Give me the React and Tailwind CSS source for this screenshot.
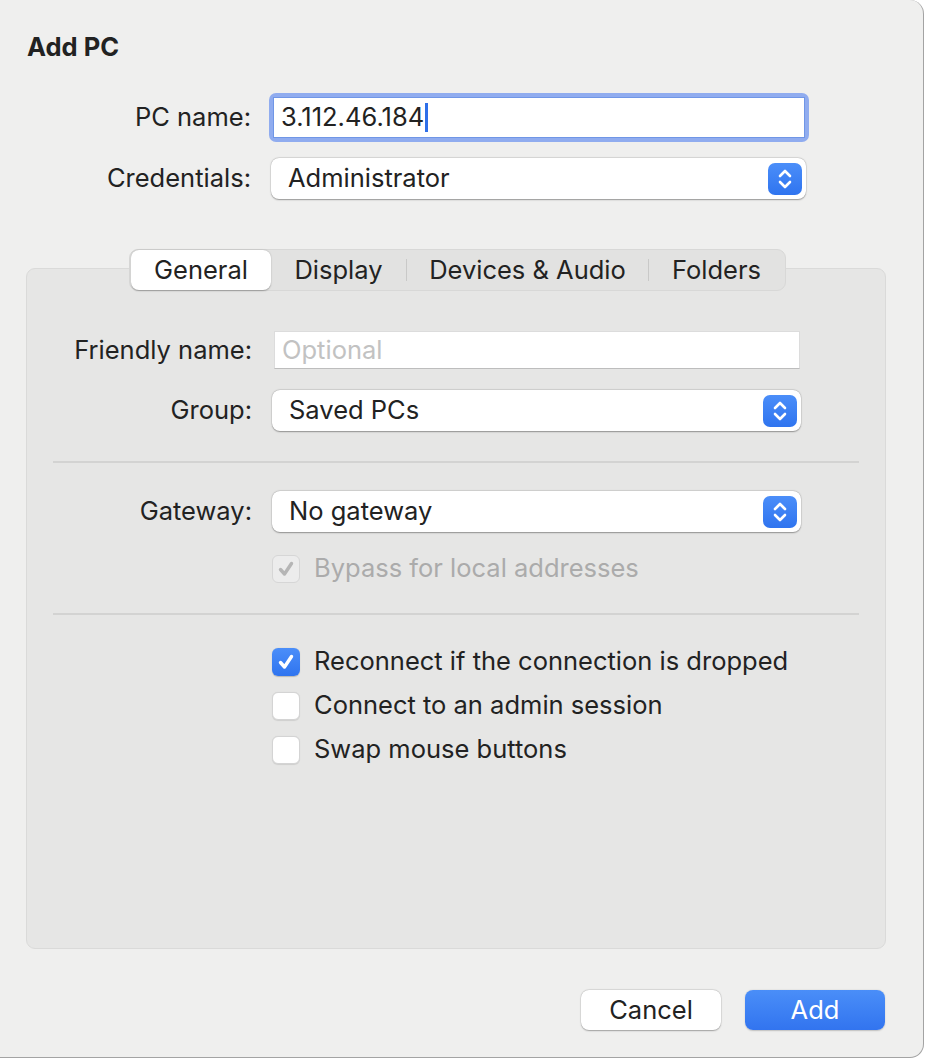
import React from "react";

const font = { fontFamily: "Inter, 'Noto Sans', sans-serif" };

function Stepper() {
  return (
    <div className="w-[34px] h-[32px] rounded-[7px] bg-gradient-to-b from-[#4b8ef9] to-[#2f74ef] flex items-center justify-center">
      <svg width="16" height="24" viewBox="0 0 16 24" fill="none" stroke="white" strokeWidth="2.6" strokeLinecap="round" strokeLinejoin="round">
        <path d="M3 9 L8 4 L13 9" />
        <path d="M3 15 L8 20 L13 15" />
      </svg>
    </div>
  );
}

function Popup({ text, width }) {
  return (
    <div
      className={`${width} h-[41px] bg-white rounded-[8px] shadow-[0_0.5px_1.5px_rgba(0,0,0,0.35),0_0_0_0.5px_rgba(0,0,0,0.08)] flex items-center justify-between pl-[17px] pr-[4px]`}
    >
      <span className="text-[25.5px] text-[#222]">{text}</span>
      <Stepper />
    </div>
  );
}

function Check({ checked, disabled, label }) {
  return (
    <div className="flex items-center h-[29px]">
      {checked && !disabled ? (
        <div className="w-[28px] h-[28px] rounded-[6px] bg-gradient-to-b from-[#4b8ef9] to-[#2f74ef] flex items-center justify-center shadow-[0_0.5px_1px_rgba(0,0,0,0.2)]">
          <svg width="18" height="18" viewBox="0 0 18 18" fill="none" stroke="white" strokeWidth="3.4" strokeLinecap="round" strokeLinejoin="round">
            <path d="M3.5 9.5 L7.5 14 L14.5 3.5" />
          </svg>
        </div>
      ) : disabled ? (
        <div className="w-[28px] h-[28px] rounded-[6px] bg-[#ececec] border border-[#d6d6d6] flex items-center justify-center">
          <svg width="18" height="18" viewBox="0 0 18 18" fill="none" stroke="#b5b5b5" strokeWidth="3.4" strokeLinecap="round" strokeLinejoin="round">
            <path d="M3.5 9.5 L7.5 14 L14.5 3.5" />
          </svg>
        </div>
      ) : (
        <div className="w-[28px] h-[28px] rounded-[6px] bg-white border border-[#d4d4d4] shadow-[0_0.5px_1px_rgba(0,0,0,0.1)]" />
      )}
      <span className={`ml-[14px] text-[25.5px] ${disabled ? "text-[#ababab]" : "text-[#222]"}`}>{label}</span>
    </div>
  );
}

export default function App() {
  return (
    <div className="w-[928px] h-[1060px] bg-white" style={font}>
      <div className="w-[924px] h-[1058px] bg-[#efefee] rounded-tr-[14px] rounded-br-[14px] border-r border-b border-[#a3a3a3] flex flex-col">
        <div className="pl-[27px] pt-[32px] h-[93px]">
          <h1 className="text-[25.5px] font-bold text-[#222] leading-[30px]">Add PC</h1>
        </div>

        {/* PC name */}
        <div className="flex items-center h-[49px]">
          <div className="w-[251px] text-right text-[25.5px] text-[#222]">PC name:</div>
          <div className="ml-[18px] w-[540px] h-[49px] rounded-[7px] bg-[#90acef] p-[4px]">
            <div className="w-full h-full bg-white border border-[#7096e6] flex items-center pl-[7px]">
              <span className="text-[25.5px] text-[#222]">3.112.46.184</span>
              <span className="ml-[1px] w-[2.5px] h-[29px] bg-[#2e6fe9]" />
            </div>
          </div>
        </div>

        {/* Credentials */}
        <div className="flex items-center h-[41px] mt-[16px]">
          <div className="w-[251px] text-right text-[25.5px] text-[#222]">Credentials:</div>
          <div className="ml-[20px]">
            <Popup text="Administrator" width="w-[535px]" />
          </div>
        </div>

        {/* Tab panel */}
        <div className="ml-[26px] mt-[69px] w-[860px] h-[681px] bg-[#e6e6e5] border border-[#dadad9] rounded-[9px] flex flex-col">
          <div className="flex justify-start -mt-[20px] pl-[102px]">
            <div className="h-[42px] w-[657px] rounded-[9px] bg-[#e2e2e1] border border-[#d8d8d7] flex items-center p-[1px] text-[25.5px] text-[#222]">
              <div className="w-[140px] h-[40px] bg-white rounded-[8px] shadow-[0_0.5px_1.5px_rgba(0,0,0,0.3)] flex items-center justify-center">General</div>
              <div className="w-[135px] flex items-center justify-center">Display</div>
              <div className="w-[1px] h-[22px] bg-[#c9c9c8]" />
              <div className="w-[241px] flex items-center justify-center">Devices &amp; Audio</div>
              <div className="w-[1px] h-[22px] bg-[#c9c9c8]" />
              <div className="flex-1 flex items-center justify-center">Folders</div>
            </div>
          </div>

          {/* Friendly name */}
          <div className="flex items-center h-[38px] mt-[40px]">
            <div className="w-[225px] text-right text-[25.5px] text-[#222]">Friendly name:</div>
            <div className="ml-[22px] w-[526px] h-[38px] bg-white border border-[#dcdcdc] border-b-[#bdbdbd] flex items-center pl-[7px]">
              <span className="text-[25.5px] text-[#c2c2c2]">Optional</span>
            </div>
          </div>

          {/* Group */}
          <div className="flex items-center h-[41px] mt-[21px]">
            <div className="w-[225px] text-right text-[25.5px] text-[#222]">Group:</div>
            <div className="ml-[20px]">
              <Popup text="Saved PCs" width="w-[529px]" />
            </div>
          </div>

          <div className="mx-[26px] mt-[30px] h-[2px] bg-[#d3d3d2]" />

          {/* Gateway */}
          <div className="flex items-center h-[41px] mt-[28px]">
            <div className="w-[225px] text-right text-[25.5px] text-[#222]">Gateway:</div>
            <div className="ml-[20px]">
              <Popup text="No gateway" width="w-[529px]" />
            </div>
          </div>

          <div className="ml-[245px] mt-[22px]">
            <Check checked disabled label="Bypass for local addresses" />
          </div>

          <div className="mx-[26px] mt-[30px] h-[2px] bg-[#d3d3d2]" />

          <div className="ml-[245px] mt-[32px] flex flex-col gap-[15px]">
            <Check checked label="Reconnect if the connection is dropped" />
            <Check label="Connect to an admin session" />
            <Check label="Swap mouse buttons" />
          </div>
        </div>

        {/* Buttons */}
        <div className="flex justify-end gap-[24px] mt-[41px] pr-[38px]">
          <button className="w-[140px] h-[40px] bg-white rounded-[8px] shadow-[0_0.5px_1.5px_rgba(0,0,0,0.3),0_0_0_0.5px_rgba(0,0,0,0.08)] text-[25.5px] text-[#222]">Cancel</button>
          <button className="w-[140px] h-[40px] rounded-[8px] bg-gradient-to-b from-[#4a8ef8] to-[#3274ef] text-[25.5px] text-white shadow-[0_0.5px_1.5px_rgba(0,0,0,0.2)]">Add</button>
        </div>
      </div>
    </div>
  );
}
